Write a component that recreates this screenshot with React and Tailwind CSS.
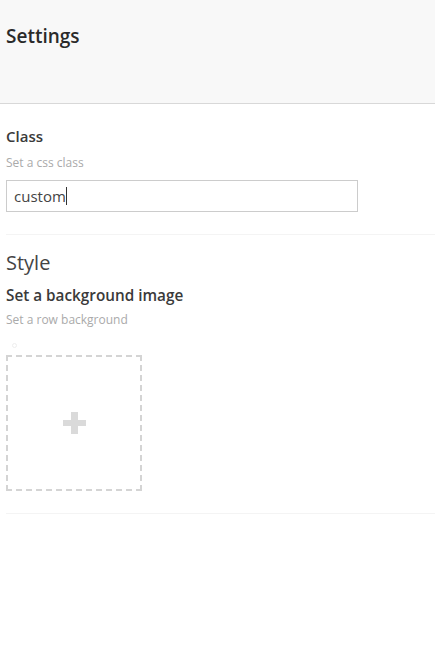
import React from 'react';

// Row settings panel
export default function App() {
    return (
        <div className="w-[435px] h-[671px] bg-white text-[#333]" style={{ fontFamily: '"Open Sans", "Noto Sans", sans-serif' }}>
            {/* Header */}
            <div className="h-[104px] bg-[#f8f8f8] border-b border-[#d8d8d8] px-[6px] pt-[22px]">
                <h1 className="text-[19px] font-semibold leading-[28px] text-[#2a2a2a]">Settings</h1>
            </div>

            {/* Class */}
            <div className="ml-[6px] pt-[22px] pb-[22px] border-b border-[#f4f4f4]">
                <div className="text-[15px] font-semibold leading-[20px] text-[#3a3a3a]">Class</div>
                <div className="text-[12px] leading-[16px] text-[#aaa] mt-[9px]">Set a css class</div>
                <div className="mt-[9px] w-[352px] h-[32px] border border-[#cccccc] flex items-center px-[7px] text-[15px] text-[#444]">
                    <span>custom</span>
                    <span className="inline-block w-px h-[18px] bg-[#333]" />
                </div>
            </div>

            {/* Style */}
            <div className="ml-[6px] pt-[14px] pb-[22px] border-b border-[#f4f4f4]">
                <div className="text-[20px] leading-[28px] text-[#444]">Style</div>
                <div className="text-[15.3px] font-semibold leading-[20px] text-[#3a3a3a] mt-[8px]">Set a background image</div>
                <div className="text-[12px] leading-[16px] text-[#aaa] mt-[7px]">Set a row background</div>
                <div className="ml-[6px] mt-[15px] w-[5px] h-[5px] rounded-full border border-[#eeeeee]" />
                <div className="mt-[7px] w-[136px] h-[136px] border-2 border-dashed border-[#d4d4d4] flex items-center justify-center">
                    <div className="relative w-[23px] h-[22px]">
                        <div className="absolute left-0 right-0 top-[8px] h-[6px] bg-[#dadada]" />
                        <div className="absolute top-0 bottom-0 left-[8px] w-[7px] bg-[#dadada]" />
                    </div>
                </div>
            </div>
        </div>
    );
}
